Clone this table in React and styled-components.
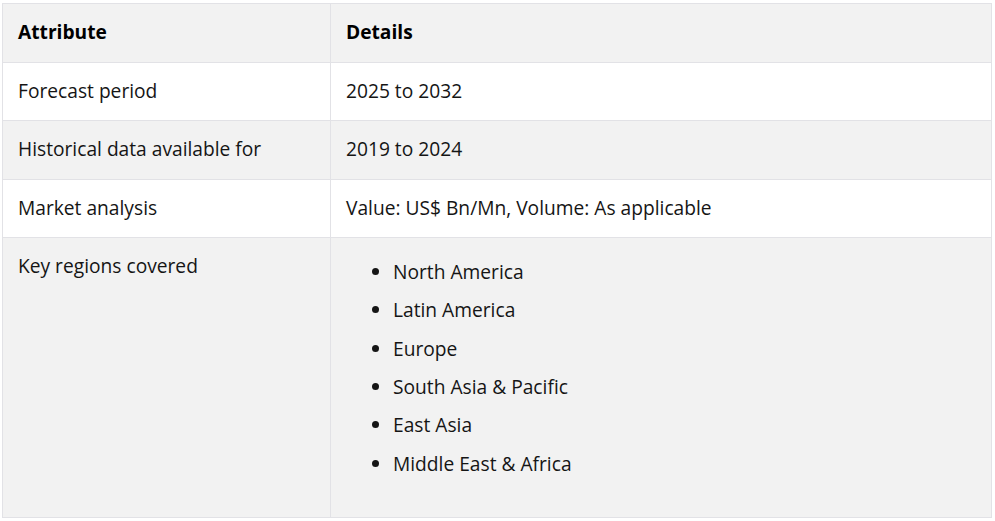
import React from 'react'
import styled, { createGlobalStyle } from 'styled-components'

const GlobalStyle = createGlobalStyle`
  body {
    margin: 0;
    padding: 3px 3px 0 2px;
    background: #fff;
    font-family: "Open Sans", "Liberation Sans", sans-serif;
  }
`

const Table = styled.table`
  width: 990px;
  border-collapse: collapse;
  font-size: 19.2px;
  line-height: 27.6px;
  color: #151515;
`

const Row = styled.tr`
  background: ${(p) => (p.$shaded ? '#f2f2f2' : '#ffffff')};
`

const HeadCell = styled.th`
  text-align: left;
  font-weight: 700;
  color: #000;
  padding: 14px 15px 16px;
  border: 1px solid #e2e2e6;
  width: ${(p) => p.$w || 'auto'};
`

const Cell = styled.td`
  padding: 14px 15px 16px;
  border: 1px solid #e2e2e6;
  vertical-align: top;
`

const List = styled.ul`
  margin: 0 0 18px;
  padding: 0 0 0 47px;
  list-style: disc;
`

const Item = styled.li`
  padding: 5.4px 0;
`

const rows = [
  ['Forecast period', '2025 to 2032'],
  ['Historical data available for', '2019 to 2024'],
  ['Market analysis', 'Value: US$ Bn/Mn, Volume: As applicable'],
]

const regions = [
  'North America',
  'Latin America',
  'Europe',
  'South Asia & Pacific',
  'East Asia',
  'Middle East & Africa',
]

export default function App() {
  return (
    <>
      <GlobalStyle />
      <Table>
        <thead>
          <Row $shaded>
            <HeadCell $w="297px">Attribute</HeadCell>
            <HeadCell>Details</HeadCell>
          </Row>
        </thead>
        <tbody>
          {rows.map(([a, d], i) => (
            <Row key={a} $shaded={i % 2 === 1}>
              <Cell>{a}</Cell>
              <Cell>{d}</Cell>
            </Row>
          ))}
          <Row $shaded>
            <Cell>Key regions covered</Cell>
            <Cell>
              <List>
                {regions.map((r) => (
                  <Item key={r}>{r}</Item>
                ))}
              </List>
            </Cell>
          </Row>
        </tbody>
      </Table>
    </>
  )
}
